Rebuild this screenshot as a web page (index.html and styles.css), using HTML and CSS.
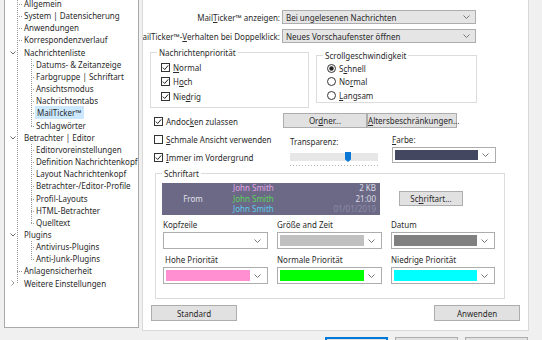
FILE: index.html
```html
<!DOCTYPE html>
<html lang="de">
<head>
    <meta charset="UTF-8">
    <meta name="viewport" content="width=device-width, initial-scale=1.0">
    <title>Einstellungen - MailTicker</title>
    <link rel="stylesheet" href="styles.css">
</head>
<body>
<div class="window">
    <div class="main">
        <!-- Navigation tree -->
        <div class="tree">
            <ul class="nodes root">
                <li>Allgemein</li>
                <li>System | Datensicherung</li>
                <li>Anwendungen</li>
                <li>Korrespondenzverlauf</li>
                <li class="parent"><svg class="twist" viewBox="0 0 6 4" width="6" height="4"><path d="M.5 .5 3 3 5.5 .5" fill="none" stroke="#6a6a6a"/></svg>Nachrichtenliste
                    <ul class="nodes">
                        <li>Datums- &amp; Zeitanzeige</li>
                        <li>Farbgruppe | Schriftart</li>
                        <li>Ansichtsmodus</li>
                        <li>Nachrichtentabs</li>
                        <li><span class="selected">MailTicker™</span></li>
                        <li>Schlagwörter</li>
                    </ul>
                </li>
                <li class="parent"><svg class="twist" viewBox="0 0 6 4" width="6" height="4"><path d="M.5 .5 3 3 5.5 .5" fill="none" stroke="#6a6a6a"/></svg>Betrachter | Editor
                    <ul class="nodes">
                        <li>Editorvoreinstellungen</li>
                        <li>Definition Nachrichtenkopf</li>
                        <li>Layout Nachrichtenkopf</li>
                        <li>Betrachter-/Editor-Profile</li>
                        <li>Profil-Layouts</li>
                        <li>HTML-Betrachter</li>
                        <li>Quelltext</li>
                    </ul>
                </li>
                <li class="parent"><svg class="twist" viewBox="0 0 6 4" width="6" height="4"><path d="M.5 .5 3 3 5.5 .5" fill="none" stroke="#6a6a6a"/></svg>Plugins
                    <ul class="nodes">
                        <li>Antivirus-Plugins</li>
                        <li>Anti-Junk-Plugins</li>
                    </ul>
                </li>
                <li>Anlagensicherheit</li>
                <li class="parent"><svg class="twist" viewBox="0 0 6 6" width="6" height="6"><path d="M1.5 .5 4 3 1.5 5.5" fill="none" stroke="#9a9a9a"/></svg>Weitere Einstellungen</li>
            </ul>
        </div>

        <!-- MailTicker page -->
        <div class="page">
            <div class="field-row first">
                <div class="field-label"><span>Mail<u>T</u>icker™ anzeigen:</span></div>
                <div class="select"><span>Bei ungelesenen Nachrichten</span><svg class="chev" viewBox="0 0 7 4" width="7" height="4"><path d="M.5 .5 3.5 3.5 6.5 .5" fill="none" stroke="#777"/></svg></div>
            </div>
            <div class="field-row">
                <div class="field-label"><span>MailTicker™-<u>V</u>erhalten bei Doppelklick:</span></div>
                <div class="select"><span>Neues Vorschaufenster öffnen</span><svg class="chev" viewBox="0 0 7 4" width="7" height="4"><path d="M.5 .5 3.5 3.5 6.5 .5" fill="none" stroke="#777"/></svg></div>
            </div>

            <div class="groups">
                <div class="group prio">
                    <div class="group-title">Nachrichtenpriorität</div>
                    <div class="opt"><svg class="box" viewBox="0 0 9 9" width="9" height="9"><rect x=".5" y=".5" width="8" height="8" fill="#fff" stroke="#333"/><path d="M1.8 4.6 3.7 6.5 7.2 2.4" fill="none" stroke="#222"/></svg><span><u>N</u>ormal</span></div>
                    <div class="opt"><svg class="box" viewBox="0 0 9 9" width="9" height="9"><rect x=".5" y=".5" width="8" height="8" fill="#fff" stroke="#333"/><path d="M1.8 4.6 3.7 6.5 7.2 2.4" fill="none" stroke="#222"/></svg><span>H<u>o</u>ch</span></div>
                    <div class="opt"><svg class="box" viewBox="0 0 9 9" width="9" height="9"><rect x=".5" y=".5" width="8" height="8" fill="#fff" stroke="#333"/><path d="M1.8 4.6 3.7 6.5 7.2 2.4" fill="none" stroke="#222"/></svg><span>Nie<u>d</u>rig</span></div>
                </div>
                <div class="group speed">
                    <div class="group-title">Scrollgeschwindigkeit</div>
                    <div class="opt"><svg class="radio" viewBox="0 0 9 9" width="9" height="9"><circle cx="4.5" cy="4.5" r="4" fill="#fff" stroke="#333"/><circle cx="4.5" cy="4.5" r="2.2" fill="#222"/></svg><span>S<u>c</u>hnell</span></div>
                    <div class="opt"><svg class="radio" viewBox="0 0 9 9" width="9" height="9"><circle cx="4.5" cy="4.5" r="4" fill="#fff" stroke="#333"/></svg><span>No<u>r</u>mal</span></div>
                    <div class="opt"><svg class="radio" viewBox="0 0 9 9" width="9" height="9"><circle cx="4.5" cy="4.5" r="4" fill="#fff" stroke="#333"/></svg><span><u>L</u>angsam</span></div>
                </div>
            </div>

            <div class="mid">
                <div class="flags">
                    <div class="opt"><svg class="box" viewBox="0 0 9 9" width="9" height="9"><rect x=".5" y=".5" width="8" height="8" fill="#fff" stroke="#333"/><path d="M1.8 4.6 3.7 6.5 7.2 2.4" fill="none" stroke="#222"/></svg><span>Andoc<u>k</u>en zulassen</span></div>
                    <div class="opt"><svg class="box" viewBox="0 0 9 9" width="9" height="9"><rect x=".5" y=".5" width="8" height="8" fill="#fff" stroke="#333"/></svg><span><u>S</u>chmale Ansicht verwenden</span></div>
                    <div class="opt"><svg class="box" viewBox="0 0 9 9" width="9" height="9"><rect x=".5" y=".5" width="8" height="8" fill="#fff" stroke="#333"/><path d="M1.8 4.6 3.7 6.5 7.2 2.4" fill="none" stroke="#222"/></svg><span><u>I</u>mmer im Vordergrund</span></div>
                </div>
                <div class="mid-right">
                    <div class="btn-pair">
                        <button class="btn folder">Or<u>d</u>ner...</button>
                        <button class="btn ages"><u>A</u>ltersbeschränkungen...</button>
                    </div>
                    <div class="look">
                        <div class="transp">
                            <div class="caption">Transparenz:</div>
                            <div class="track"><svg class="thumb" viewBox="0 0 6 10" width="6" height="10"><path d="M0 0H6V7.5L3 10 0 7.5Z" fill="#0a78d4"/></svg></div>
                            <div class="ticks"></div>
                        </div>
                        <div class="color">
                            <div class="caption"><u>F</u>arbe:</div>
                            <div class="swatch-select tall"><span class="swatch navy"></span><span class="drop"><svg class="chev" viewBox="0 0 7 4" width="7" height="4"><path d="M.5 .5 3.5 3.5 6.5 .5" fill="none" stroke="#777"/></svg></span></div>
                        </div>
                    </div>
                </div>
            </div>

            <div class="group font">
                <div class="group-title">Schriftart</div>
                <div class="preview-row">
                    <div class="preview">
                        <div class="from">From</div>
                        <div class="names">
                            <div class="pink">John Smith</div>
                            <div class="green">John Smith</div>
                            <div class="cyan">John Smith</div>
                        </div>
                        <div class="meta">
                            <div>2 KB</div>
                            <div>21:00</div>
                            <div class="date">01/01/2019</div>
                        </div>
                    </div>
                    <button class="btn font-btn">Sc<u>h</u>riftart...</button>
                </div>
                <div class="color-grid">
                    <div class="cell">
                        <div class="caption">Kopfzeile</div>
                        <div class="swatch-select"><span class="swatch white"></span><span class="drop"><svg class="chev" viewBox="0 0 7 4" width="7" height="4"><path d="M.5 .5 3.5 3.5 6.5 .5" fill="none" stroke="#777"/></svg></span></div>
                    </div>
                    <div class="cell">
                        <div class="caption">Größe and Zeit</div>
                        <div class="swatch-select"><span class="swatch silver"></span><span class="drop"><svg class="chev" viewBox="0 0 7 4" width="7" height="4"><path d="M.5 .5 3.5 3.5 6.5 .5" fill="none" stroke="#777"/></svg></span></div>
                    </div>
                    <div class="cell">
                        <div class="caption">Datum</div>
                        <div class="swatch-select"><span class="swatch grey"></span><span class="drop"><svg class="chev" viewBox="0 0 7 4" width="7" height="4"><path d="M.5 .5 3.5 3.5 6.5 .5" fill="none" stroke="#777"/></svg></span></div>
                    </div>
                    <div class="cell">
                        <div class="caption indent">Hohe Priorität</div>
                        <div class="swatch-select"><span class="swatch pink"></span><span class="drop"><svg class="chev" viewBox="0 0 7 4" width="7" height="4"><path d="M.5 .5 3.5 3.5 6.5 .5" fill="none" stroke="#777"/></svg></span></div>
                    </div>
                    <div class="cell">
                        <div class="caption">Normale Priorität</div>
                        <div class="swatch-select"><span class="swatch lime"></span><span class="drop"><svg class="chev" viewBox="0 0 7 4" width="7" height="4"><path d="M.5 .5 3.5 3.5 6.5 .5" fill="none" stroke="#777"/></svg></span></div>
                    </div>
                    <div class="cell">
                        <div class="caption">Niedrige Priorität</div>
                        <div class="swatch-select"><span class="swatch aqua"></span><span class="drop"><svg class="chev" viewBox="0 0 7 4" width="7" height="4"><path d="M.5 .5 3.5 3.5 6.5 .5" fill="none" stroke="#777"/></svg></span></div>
                    </div>
                </div>
            </div>

            <div class="page-buttons">
                <button class="btn wide">Standard</button>
                <button class="btn wide">Anwenden</button>
            </div>
        </div>
    </div>

    <div class="footer">
        <button class="btn dlg default">OK</button>
        <button class="btn dlg">Abbrechen</button>
        <button class="btn dlg">Hilfe</button>
    </div>
</div>
</body>
</html>
```

FILE: styles.css
```css
*{
    box-sizing: border-box;
}
html, body{
    margin: 0;
}
body{
    width: 542px;
    height: 340px;
    overflow: hidden;
    background: #f0f0f0;
    font-family: "Noto Sans", "Open Sans", sans-serif;
    font-size: 8px;
    line-height: 11px;
    color: #2a2a2a;
}
u{
    text-decoration-thickness: 1px;
    text-underline-offset: 1px;
}
.main{
    display: flex;
    margin-top: -6px;
}

/* tree */
.tree{
    width: 135px;
    height: 334px;
    margin-left: 4px;
    padding-top: 3px;
    background: #fff;
    border: 1px solid #a9a9a9;
    overflow: hidden;
}
ul.nodes{
    list-style: none;
    margin: 0;
    padding: 0;
    background: repeating-linear-gradient(to bottom, #9a9a9a 0 1px, transparent 1px 2px) 12px 0 / 1px calc(100% - 6px) no-repeat;
}
ul.nodes ul.nodes{
    margin-left: -7px;
    background-position: 14px 0;
}
.nodes > li{
    padding-left: 19px;
    line-height: 12.15px;
    white-space: nowrap;
}
.nodes > li:not(.parent){
    background: repeating-linear-gradient(to right, #9a9a9a 0 1px, transparent 1px 2px) 12px 6px / 6px 1px no-repeat;
}
.nodes .nodes > li:not(.parent){
    background-position: 14px 6px;
    background-size: 4px 1px;
}
.twist{
    margin-left: -14px;
    margin-right: 8px;
    vertical-align: 1px;
}
.selected{
    background: #cce8ff;
    margin-left: -1px;
    padding: 1px 2px;
}

/* page */
.page{
    width: 387px;
    height: 337px;
    margin-left: 3px;
    background: #fff;
    border: 1px solid #d9d9d9;
    overflow: hidden;
}
.field-row{
    display: flex;
    align-items: center;
    height: 14px;
    margin-top: 5px;
}
.field-row.first{
    margin-top: 15px;
}
.field-label{
    width: 137px;
    flex: none;
    display: flex;
    justify-content: flex-end;
    white-space: nowrap;
}
.select{
    width: 194px;
    height: 14px;
    margin-left: 2px;
    padding: 0 5px 0 3px;
    display: flex;
    align-items: center;
    justify-content: space-between;
    background: #e5e5e5;
    border: 1px solid #adadad;
}

.group{
    border: 1px solid #dcdcdc;
}
.group-title{
    width: fit-content;
    height: 11px;
    margin: -6px 0 0 6px;
    padding: 0 2px;
    background: #fff;
}
.groups{
    display: flex;
    align-items: flex-start;
    margin: 9px 0 0 7px;
}
.opt{
    display: flex;
    align-items: center;
    gap: 3px;
    white-space: nowrap;
}
.prio{
    width: 159px;
    height: 56px;
    padding-left: 10px;
}
.prio .group-title{
    margin-left: -4px;
}
.prio .opt{
    height: 14.5px;
}
.prio .group-title + .opt{
    margin-top: 2px;
}
.speed{
    width: 161px;
    height: 48px;
    margin: 3px 0 0 7px;
    padding-left: 10px;
}
.speed .group-title{
    margin-left: -4px;
}
.speed .opt{
    height: 13.3px;
}
.speed .group-title + .opt{
    margin-top: 1px;
}

.mid{
    display: flex;
}
.flags{
    width: 140px;
    padding: 4px 0 0 11px;
}
.flags .opt{
    height: 18px;
}
.mid-right{
    padding-top: 5px;
}
.btn{
    font: inherit;
    color: inherit;
    padding: 0;
    background: #e1e1e1;
    border: 1px solid #adadad;
    border-radius: 0;
}
.btn-pair{
    display: flex;
}
.btn-pair .btn{
    height: 15px;
}
.folder{
    width: 84px;
}
.ages{
    width: 90px;
}
.look{
    display: flex;
}
.transp{
    width: 88px;
    margin: 7.5px 0 0 7px;
}
.track{
    height: 10px;
    margin-top: 5px;
    padding-left: 55px;
    background: linear-gradient(#e7e7e7, #e7e7e7) 0 1px / 100% 8px no-repeat;
}
.thumb{
    display: block;
}
.ticks{
    height: 1px;
    margin-top: 3px;
    background: repeating-linear-gradient(to right, #b4b4b4 0 1px, transparent 1px 3px);
}
.color{
    width: 104px;
    margin: 5.5px 0 0 14px;
}
.swatch-select{
    height: 17px;
    margin-top: 2.5px;
    padding: 2px;
    display: flex;
    background: #fff;
    border: 1px solid #adadad;
}
.swatch-select.tall{
    height: 16px;
}
.swatch{
    flex: 1;
}
.drop{
    width: 15px;
    display: flex;
    align-items: center;
    justify-content: center;
}
.navy{ background: #444760; }
.white{ background: #fff; }
.silver{ background: #c0c0c0; }
.grey{ background: #808080; }
.pink{ background: #ff8fd0; }
.lime{ background: #00ff00; }
.aqua{ background: #00ffff; }

/* font group */
.font{
    width: 350px;
    height: 126px;
    margin: 7px 0 0 12px;
}
.preview-row{
    display: flex;
    align-items: center;
    margin-top: 4px;
    padding-left: 6px;
}
.preview{
    width: 218px;
    height: 31.5px;
    display: flex;
    align-items: center;
    background: #6b6985;
    line-height: 10.5px;
}
.from{
    width: 62px;
    text-align: center;
    color: #e2e2ea;
}
.names{
    margin-left: 9px;
}
.names .pink{ background: none; color: #e3a3e6; }
.names .green{ color: #5ed25e; }
.names .cyan{ color: #5cc9ea; }
.meta{
    flex: 1;
    padding-right: 4px;
    text-align: right;
    color: #dcdce4;
}
.meta .date{
    color: #8d8ba8;
}
.font-btn{
    width: 64px;
    height: 15px;
    margin-left: 19px;
}
.color-grid{
    display: grid;
    grid-template-columns: 105px 105px 104px;
    column-gap: 9px;
    row-gap: 4.5px;
    margin: 4px 0 0 7px;
}
.caption.indent{
    padding-left: 2px;
}

.page-buttons{
    display: flex;
    justify-content: space-between;
    margin-top: 6px;
    padding: 0 8px;
}
.wide{
    width: 86px;
    height: 16px;
}

/* dialog buttons */
.footer{
    display: flex;
    justify-content: flex-end;
    gap: 7px;
    margin-top: 6px;
    padding-right: 14px;
}
.dlg{
    width: 63px;
    height: 21px;
}
.dlg.default{
    border-color: #0078d7;
    box-shadow: inset 0 0 0 1px #0078d7;
}
```
